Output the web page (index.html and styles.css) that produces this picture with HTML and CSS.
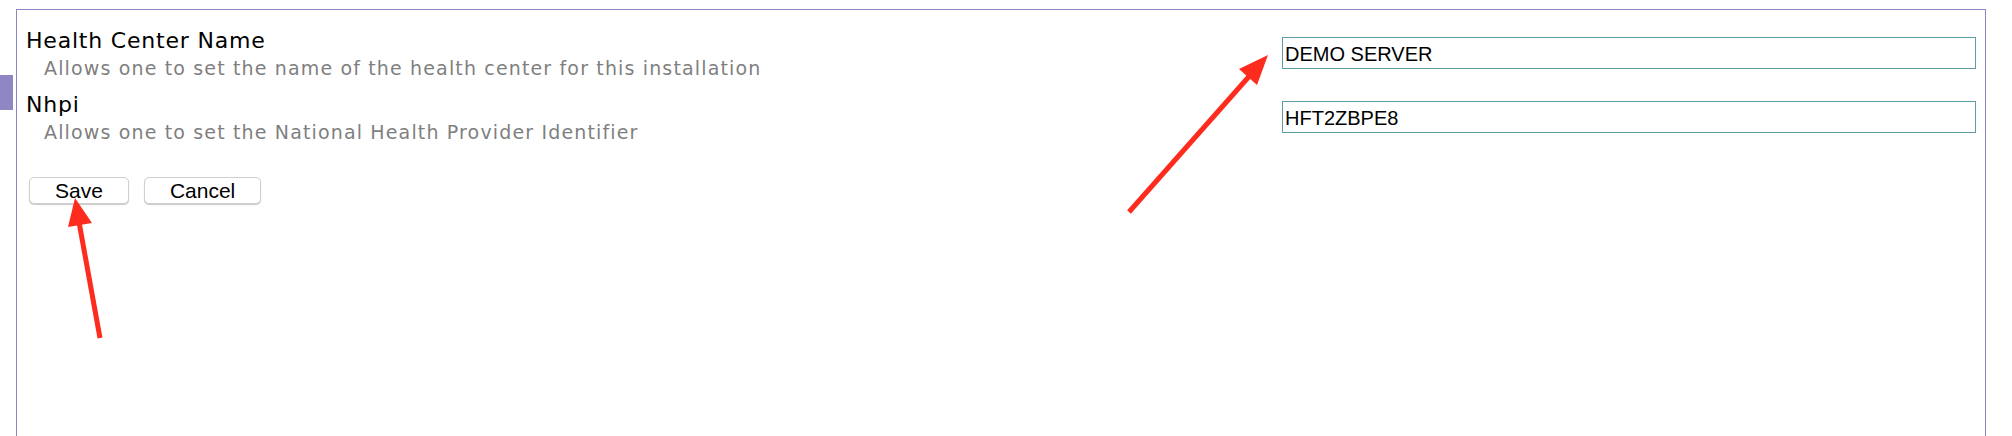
FILE: index.html
```html
<!DOCTYPE html>
<html lang="en">
<head>
<meta charset="utf-8">
<title>Globals</title>
<link rel="stylesheet" href="styles.css">
</head>
<body>
<div class="side-tab"></div>
<div class="panel">
  <form class="settings">
    <div class="setting">
      <div class="setting-text">
        <div class="setting-title">Health Center Name</div>
        <div class="setting-desc">Allows one to set the name of the health center for this installation</div>
      </div>
      <input class="setting-input" type="text" value="DEMO SERVER">
    </div>
    <div class="setting">
      <div class="setting-text">
        <div class="setting-title">Nhpi</div>
        <div class="setting-desc">Allows one to set the National Health Provider Identifier</div>
      </div>
      <input class="setting-input" type="text" value="HFT2ZBPE8">
    </div>
    <div class="actions">
      <button type="button" class="btn">Save</button>
      <button type="button" class="btn">Cancel</button>
    </div>
  </form>
</div>
<svg class="annotations" width="2012" height="436" viewBox="0 0 2012 436" xmlns="http://www.w3.org/2000/svg">
  <line x1="1129" y1="212" x2="1253" y2="72" stroke="#fd2c1e" stroke-width="5" stroke-linecap="butt"/>
  <polygon points="1268,55 1257,85 1239,69" fill="#fd2c1e"/>
  <line x1="100" y1="338" x2="79" y2="222" stroke="#fd2c1e" stroke-width="5" stroke-linecap="butt"/>
  <polygon points="75,198 92,223 68,227" fill="#fd2c1e"/>
</svg>
</body>
</html>
```
FILE: styles.css
```css
html, body {
  margin: 0;
  padding: 0;
  height: 100%;
  overflow: hidden;
  background: #ffffff;
}

body {
  position: relative;
  font-family: "DejaVu Sans", Verdana, sans-serif;
  color: #000;
}

.side-tab {
  position: absolute;
  left: 0;
  top: 75px;
  width: 13px;
  height: 35px;
  background: #8f86c4;
}

.panel {
  margin: 9px 26px 0 16px;
  height: 427px;
  border: 1px solid #8e85c2;
  border-bottom: none;
  padding: 17px 9px 0 9px;
  box-sizing: border-box;
}

.settings {
  display: flex;
  flex-direction: column;
  gap: 9px;
}

.setting {
  display: flex;
  justify-content: space-between;
  align-items: flex-start;
}

.setting-title {
  font-size: 22px;
  line-height: 27px;
  letter-spacing: 0.8px;
  color: #000;
}

.setting-desc {
  font-size: 19px;
  line-height: 28px;
  color: #7f7f7f;
  padding-left: 18px;
  letter-spacing: 1.15px;
}

.setting-input {
  margin-top: 10px;
  width: 694px;
  height: 32px;
  box-sizing: border-box;
  border: 1px solid #5f9ea0;
  border-radius: 0;
  padding: 2px 2px 0 2px;
  font-family: "Liberation Sans", Arial, sans-serif;
  font-size: 20px;
  color: #000;
  background: #fff;
  outline: none;
}

.actions {
  display: flex;
  gap: 15px;
  margin-top: 22px;
  padding-left: 3px;
}

.btn {
  height: 27px;
  padding: 0 25px;
  background: #fff;
  border: 1px solid #cfcfcf;
  border-radius: 5px;
  box-shadow: 0 1px 1px rgba(0, 0, 0, 0.22);
  font-family: "Liberation Sans", Arial, sans-serif;
  font-size: 21px;
  line-height: 25px;
  color: #000;
}

.annotations {
  position: absolute;
  left: 0;
  top: 0;
  pointer-events: none;
}
```
